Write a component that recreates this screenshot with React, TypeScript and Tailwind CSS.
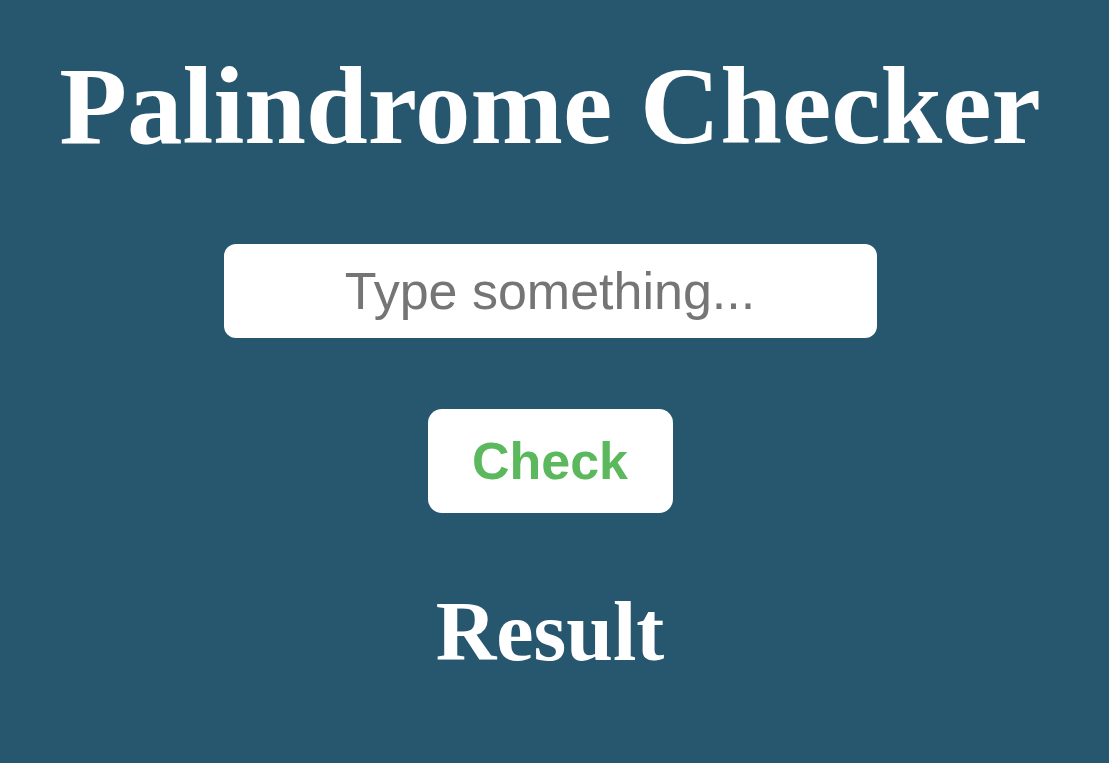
import { useState } from 'react';

const App = () => {
    const [text, setText] = useState('');

    return (
        <div className="min-h-screen w-full bg-[#27566f]">
            <div className="flex flex-col items-center w-[1100px]">
                <h1 className="mt-[50px] text-[111px] leading-none font-bold text-white font-['Liberation_Serif',serif]">
                    Palindrome Checker
                </h1>
                <input
                    type="text"
                    value={text}
                    onChange={(e) => setText(e.target.value)}
                    placeholder="Type something..."
                    className="mt-[83px] w-[653px] h-[94px] rounded-xl bg-white text-center text-[52px] text-[#333] placeholder:text-[#757575] outline-none font-['Liberation_Sans',Arial,sans-serif]"
                />
                <button className="mt-[71px] w-[245px] h-[104px] rounded-[14px] bg-white text-[52px] font-bold text-[#5cb85c] font-['Liberation_Sans',Arial,sans-serif] cursor-pointer">
                    Check
                </button>
                <p className="mt-[77px] text-[84px] leading-none font-bold text-white font-['Liberation_Serif',serif]">
                    Result
                </p>
            </div>
        </div>
    );
};

export default App;
